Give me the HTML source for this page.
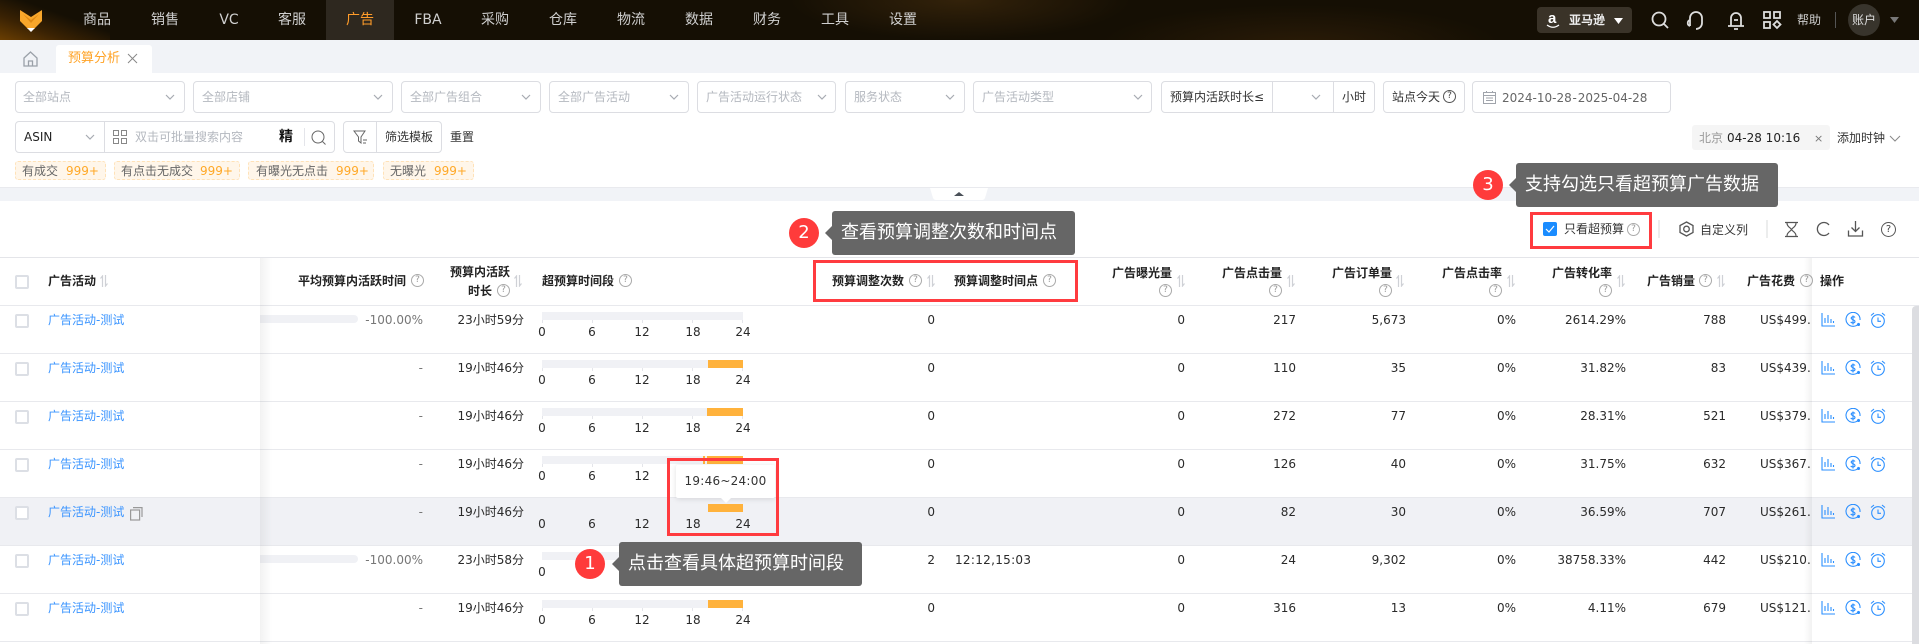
<!DOCTYPE html>
<html lang="zh"><head><meta charset="utf-8"><title>预算分析</title>
<style>
*{box-sizing:border-box}
html,body{margin:0;padding:0}
body{width:1919px;height:644px;overflow:hidden;position:relative;background:#f1f3f7;font:12px/16px "DejaVu Sans","WenQuanYi Zen Hei","Noto Sans CJK SC",sans-serif;color:#2a2a2a}
.a{position:absolute;white-space:nowrap}
#top{position:absolute;left:0;top:0;width:1919px;height:40px;background:
 radial-gradient(ellipse 170px 40px at 960px 0,#33220a 0,rgba(51,34,10,0) 100%),
 radial-gradient(ellipse 200px 40px at 1300px 45px,#2a1b07 0,rgba(42,27,7,0) 100%),
 linear-gradient(135deg,rgba(0,0,0,0) 70px,rgba(0,0,0,0) 100%),#150f04}
#corner{position:absolute;left:0;top:0;width:110px;height:40px;background:linear-gradient(to top right,#6a3e02 0,#3a2203 30%,#150f04 60%)}
.n{position:absolute;top:12px;font-size:14px;line-height:16px;color:#cfcfcf;transform:translateX(-50%);white-space:nowrap}
.s{position:absolute;top:81px;height:32px;background:#fff;border:1px solid #dcdde2;border-radius:4px}
.ph{position:absolute;top:89px;color:#b4b8bf;white-space:nowrap}
.tag{position:absolute;top:161px;height:19px;background:#fff6ea;border:1px dashed #ffe2b8;border-radius:3px}
.tx{position:absolute;top:163px;color:#666;white-space:nowrap}
.or{position:absolute;top:163px;color:#ffa827;white-space:nowrap}
.bb{position:absolute;background:#666;border-radius:3px;color:#fff;font-size:18px;line-height:24px;white-space:nowrap}
.bb:before{content:"";position:absolute;left:-7px;top:50%;margin-top:-7px;border:7px solid transparent;border-left:0;border-right-color:#666}
.rd{position:absolute;width:30px;height:30px;border-radius:50%;background:#ff3b3b;color:#fff;font-size:18px;line-height:30px;text-align:center}
.box{position:absolute;border:3px solid #ff3b3f}
.h{position:absolute;font-weight:bold;color:#222;white-space:nowrap;line-height:16px}
.q{position:absolute;width:13px;height:13px;border:1px solid #aaa;border-radius:50%;color:#999;font-size:9px;line-height:11px;text-align:center;font-weight:normal}
.so{position:absolute;width:8px;height:12px}
.r{position:absolute;left:0;width:1919px;height:48px;border-top:1px solid #e8e9ed;background:#fff}
.r.hv{background:#f0f1f5}
.ck{position:absolute;left:15px;top:8px;width:14px;height:14px;background:#fff;border:2px solid #dcdfe5;border-radius:2px}
.lk{position:absolute;left:48px;top:6px;color:#3a94ff;white-space:nowrap}
.v{position:absolute;top:6px;white-space:nowrap;color:#2a2a2a}
.avg{right:1496px;color:#777}
.dur{right:1395px}.adj{right:984px}.exp{right:734px}.clk{right:623px}.ord{right:513px}.ctr{right:403px}.cvr{right:293px}.sal{right:193px}
.sp{position:absolute;left:1760px;top:6px;width:52px;overflow:hidden;white-space:nowrap}
.bar{position:absolute;left:542px;top:6px;width:201px;height:8px;background:#f0f1f5}
.o{position:absolute;top:0;bottom:0;right:0;background:#ffb23c}
.tk{position:absolute;top:14px;width:1px;height:3px;background:#e4e5ea}
.lb{position:absolute;top:18px;width:30px;margin-left:-15px;text-align:center;color:#2a2a2a}
.pg{position:absolute;left:260px;top:9px;width:98px;height:8px;background:#f0f1f5;border-radius:0 4px 4px 0}
.ic{position:absolute;width:16px;height:16px;fill:none;stroke:#2b8fff;stroke-width:1.1}
svg{overflow:visible}
</style></head><body>
<svg width="0" height="0" style="position:absolute"><defs>
<symbol id="sort" viewBox="0 0 8 12"><path d="M2.500 12V1L.5 3.500M5.500 0v11l2-2.500" fill="none" stroke="#cfd1d6" stroke-width="1.200"/></symbol>
<symbol id="chev" viewBox="0 0 10 6"><path d="M1 1l4 4 4-4" fill="none" stroke="#a7abb2" stroke-width="1.200"/></symbol>
<symbol id="ib" viewBox="0 0 16 16"><path d="M2 1v13h13M5 11V6M8 11V3M11 11V7M13.500 11V9"/></symbol>
<symbol id="id" viewBox="0 0 16 16"><path d="M14 11A7 7 0 1 1 15 8M10 5.500C9.500 4.500 6.500 4.300 6.200 6c-.3 2 3.800 1.500 3.800 3.500 0 1.800-3.300 1.800-4.300.5M8 3.500v9"/><circle cx="13.500" cy="12.500" r="1" fill="#2b8fff"/></symbol>
<symbol id="ick" viewBox="0 0 16 16"><circle cx="8" cy="9" r="6.300"/><path d="M8 5.500V9.300h3M1 3.500L4 1M15 3.500L12 1"/></symbol>
</defs></svg>

<!-- Top bar -->
<div id="top"><div id="corner"></div>
<svg class="a" style="left:20px;top:10px" width="22" height="23" viewBox="0 0 22 23"><path d="M0 0l11 7 11-7v11l-8 8H8L0 11z" fill="#f9a72b"/><path d="M3 4l8 6 8-6-8 9z" fill="#e08a14"/><path d="M7 18h8l-4 4z" fill="#fff"/></svg>
<div style="position:absolute;left:326px;top:0;width:68px;height:40px;background:#2e281f"></div>
<div class="n" style="left:97px">商品</div><div class="n" style="left:165px">销售</div><div class="n" style="left:229px">VC</div><div class="n" style="left:292px">客服</div><div class="n" style="left:360px;color:#ff9c2a">广告</div><div class="n" style="left:428px">FBA</div><div class="n" style="left:495px">采购</div><div class="n" style="left:563px">仓库</div><div class="n" style="left:631px">物流</div><div class="n" style="left:699px">数据</div><div class="n" style="left:767px">财务</div><div class="n" style="left:835px">工具</div><div class="n" style="left:903px">设置</div>
<div style="position:absolute;left:1537px;top:7px;width:95px;height:26px;background:#3a3328;border-radius:4px"></div>
<div class="a" style="left:1548px;top:9px;font:bold 15px/20px 'Liberation Sans',sans-serif;color:#fff">a</div>
<svg class="a" style="left:1546px;top:25px" width="14" height="4" viewBox="0 0 14 4"><path d="M1 0c4 3 8 3 12 0" fill="none" stroke="#fff" stroke-width="1.200"/></svg>
<div class="a" style="left:1569px;top:12px;color:#eee;font-weight:bold">亚马逊</div>
<svg class="a" style="left:1614px;top:18px" width="9" height="6"><path d="M0 0h9L4.500 6z" fill="#fff"/></svg>
<svg class="a" style="left:1651px;top:11px" width="18" height="18" fill="none" stroke="#ddd" stroke-width="1.800"><circle cx="8" cy="8" r="6.500"/><path d="M13 13l4 4"/></svg>
<svg class="a" style="left:1687px;top:11px" width="18" height="19" fill="none" stroke="#ddd" stroke-width="1.800"><path d="M3 9c-3 1-3 5 0 6M3 15V7a6 6 0 0 1 12 0v5a6 6 0 0 1-6 6"/></svg>
<svg class="a" style="left:1727px;top:11px" width="18" height="19" fill="none" stroke="#ddd" stroke-width="1.800"><path d="M1 15h16M4 15V7a5 5 0 0 1 10 0v8M7 18h4M7 9h4"/></svg>
<svg class="a" style="left:1763px;top:11px" width="18" height="18" fill="none" stroke="#ddd" stroke-width="1.800"><rect x="1" y="1" width="6" height="6"/><rect x="11" y="1" width="6" height="6"/><rect x="1" y="11" width="6" height="6"/><path d="M14 10l3.500 3.500L14 17l-3.500-3.500z"/></svg>
<div class="a" style="left:1797px;top:12px;color:#ccc">帮助</div>
<div style="position:absolute;left:1835px;top:12px;width:1px;height:16px;background:#555"></div>
<div style="position:absolute;left:1848px;top:4px;width:32px;height:32px;border-radius:50%;background:#38342c"></div>
<div class="a" style="left:1852px;top:12px;color:#ddd">账户</div>
<svg class="a" style="left:1890px;top:17px" width="9" height="6"><path d="M0 0h9L4.500 6z" fill="#777"/></svg>
</div>

<!-- Tab bar -->
<svg class="a" style="left:23px;top:51px" width="15" height="16" fill="none" stroke="#9aa0a8" stroke-width="1.300"><path d="M1 7l6.500-6L14 7v8H1zM5.500 15v-5h4v5"/></svg>
<div style="position:absolute;left:56px;top:45px;width:96px;height:29px;background:#fff;border-radius:3px 3px 0 0"></div>
<div class="a" style="left:68px;top:51px;font-size:13px;color:#ffa327">预算分析</div>
<svg class="a" style="left:128px;top:54px" width="9" height="9" stroke="#888" stroke-width="1"><path d="M0 0l9 9M9 0L0 9"/></svg>

<!-- Filter panel -->
<div style="position:absolute;left:0;top:73px;width:1919px;height:115px;background:#fff;border-bottom:1px solid #e9eaee"></div>
<div class="s" style="left:15px;width:170px"></div><div class="ph" style="left:23px">全部站点</div><svg class="a" style="left:165px;top:94px" width="10" height="6"><use href="#chev"/></svg>
<div class="s" style="left:193px;width:200px"></div><div class="ph" style="left:202px">全部店铺</div><svg class="a" style="left:373px;top:94px" width="10" height="6"><use href="#chev"/></svg>
<div class="s" style="left:401px;width:140px"></div><div class="ph" style="left:410px">全部广告组合</div><svg class="a" style="left:521px;top:94px" width="10" height="6"><use href="#chev"/></svg>
<div class="s" style="left:549px;width:140px"></div><div class="ph" style="left:558px">全部广告活动</div><svg class="a" style="left:669px;top:94px" width="10" height="6"><use href="#chev"/></svg>
<div class="s" style="left:697px;width:139px"></div><div class="ph" style="left:706px">广告活动运行状态</div><svg class="a" style="left:817px;top:94px" width="10" height="6"><use href="#chev"/></svg>
<div class="s" style="left:845px;width:120px"></div><div class="ph" style="left:854px">服务状态</div><svg class="a" style="left:945px;top:94px" width="10" height="6"><use href="#chev"/></svg>
<div class="s" style="left:973px;width:179px"></div><div class="ph" style="left:982px">广告活动类型</div><svg class="a" style="left:1133px;top:94px" width="10" height="6"><use href="#chev"/></svg>
<div class="s" style="left:1161px;width:214px"></div>
<div style="position:absolute;left:1272px;top:81px;width:1px;height:32px;background:#dcdde2"></div>
<div style="position:absolute;left:1333px;top:81px;width:1px;height:32px;background:#dcdde2"></div>
<div class="a" style="left:1170px;top:89px;color:#333">预算内活跃时长≤</div>
<svg class="a" style="left:1311px;top:94px" width="10" height="6"><use href="#chev"/></svg>
<div class="a" style="left:1342px;top:89px;color:#333">小时</div>
<div class="s" style="left:1383px;width:82px"></div>
<div class="a" style="left:1392px;top:89px;color:#333">站点今天</div>
<div class="q" style="left:1443px;top:90px;border-color:#555;color:#444">?</div>
<div class="s" style="left:1472px;width:199px"></div>
<svg class="a" style="left:1483px;top:91px" width="13" height="13" fill="none" stroke="#a0a4ab"><rect x=".5" y="1.500" width="12" height="11"/><path d="M.5 4.500h12M3 7h7M3 9.500h7M3.500 0v2M9.500 0v2"/></svg>
<div class="a" style="left:1502px;top:90px;color:#666;word-spacing:-3px">2024-10-28 - 2025-04-28</div>

<div class="s" style="left:15px;top:121px;width:320px"></div>
<div style="position:absolute;left:104px;top:121px;width:1px;height:32px;background:#dcdde2"></div>
<div class="a" style="left:24px;top:129px;color:#222">ASIN</div>
<svg class="a" style="left:85px;top:134px" width="10" height="6"><use href="#chev"/></svg>
<svg class="a" style="left:113px;top:130px" width="14" height="14" fill="none" stroke="#888"><rect x=".5" y=".5" width="5" height="5"/><rect x="8.500" y=".5" width="5" height="5"/><rect x=".5" y="8.500" width="5" height="5"/><rect x="8.500" y="8.500" width="5" height="5"/></svg>
<div class="a" style="left:135px;top:129px;color:#b4b8bf">双击可批量搜索内容</div>
<div class="a" style="left:279px;top:129px;font-size:14px;color:#111;font-weight:bold">精</div>
<div style="position:absolute;left:304px;top:128px;width:1px;height:18px;background:#e4e5ea"></div>
<svg class="a" style="left:311px;top:130px" width="16" height="16" fill="none" stroke="#666"><circle cx="7" cy="7" r="6"/><path d="M11.500 11.500l3 3"/></svg>
<div class="s" style="left:343px;top:121px;width:99px"></div>
<div style="position:absolute;left:376px;top:121px;width:1px;height:32px;background:#dcdde2"></div>
<svg class="a" style="left:353px;top:130px" width="15" height="15" fill="none" stroke="#666"><path d="M1 1h11L8 7v6L5.500 11V7zM10 10h4M10 13h3"/></svg>
<div class="a" style="left:385px;top:129px;color:#333">筛选模板</div>
<div class="a" style="left:450px;top:129px;color:#333">重置</div>

<div style="position:absolute;left:1692px;top:125px;width:138px;height:25px;background:#f5f5f5;border-radius:3px"></div>
<div class="a" style="left:1699px;top:130px;color:#999">北京</div>
<div class="a" style="left:1727px;top:130px;color:#222">04-28 10:16</div>
<div class="a" style="left:1814px;top:131px;color:#777;font-size:11px">×</div>
<div class="a" style="left:1837px;top:130px;color:#333">添加时钟</div>
<svg class="a" style="left:1889px;top:135px" width="12" height="7"><path d="M1 1l5 5 5-5" fill="none" stroke="#888"/></svg>

<div class="tag" style="left:15px;width:91px"></div><div class="tx" style="left:22px">有成交</div><div class="or" style="left:66px">999+</div>
<div class="tag" style="left:114px;width:126px"></div><div class="tx" style="left:121px">有点击无成交</div><div class="or" style="left:200px">999+</div>
<div class="tag" style="left:248px;width:126px"></div><div class="tx" style="left:256px">有曝光无点击</div><div class="or" style="left:336px">999+</div>
<div class="tag" style="left:383px;width:91px"></div><div class="tx" style="left:390px">无曝光</div><div class="or" style="left:434px">999+</div>

<!-- Collapse handle -->
<svg class="a" style="left:930px;top:188px" width="58" height="12"><path d="M0 0h58l-3 10q-1 2-3 2H6q-2 0-3-2z" fill="#fff"/><path d="M24 8l5-4 5 4z" fill="#4a5058"/></svg>

<!-- Toolbar & table -->
<div style="position:absolute;left:0;top:201px;width:1919px;height:443px;background:#fff"></div>
<div style="position:absolute;left:0;top:257px;width:1919px;height:1px;background:#e4e5e9"></div>

<div class="a" style="left:1564px;top:221px;color:#333">只看超预算</div>
<div style="position:absolute;left:1543px;top:222px;width:14px;height:14px;background:#1a8cff;border-radius:2px"></div>
<svg class="a" style="left:1545px;top:225px" width="10" height="8"><path d="M1 4l3 3 5-6" fill="none" stroke="#fff" stroke-width="1.200"/></svg>
<div class="q" style="left:1627px;top:223px">?</div>
<div style="position:absolute;left:1658px;top:220px;width:2px;height:18px;background:#eceded"></div>
<svg class="a" style="left:1679px;top:221px" width="15" height="16" fill="none" stroke="#555" stroke-width="1.300"><path d="M7.500 1l6.500 3.500v7L7.500 15 1 11.500v-7z"/><circle cx="7.500" cy="8" r="2.800"/></svg>
<div class="a" style="left:1700px;top:222px;color:#333">自定义列</div>
<div style="position:absolute;left:1766px;top:220px;width:2px;height:18px;background:#eceded"></div>
<svg class="a" style="left:1785px;top:222px" width="13" height="15" fill="none" stroke="#555" stroke-width="1.200"><path d="M0 .5h13M0 14.500h13M2 1c0 4 3 4 4.500 6.500C8 5 11 5 11 1M2 14c0-4 3-4 4.500-6.500C8 10 11 10 11 14"/></svg>
<svg class="a" style="left:1816px;top:222px" width="14" height="14" fill="none" stroke="#555" stroke-width="1.300"><path d="M13 3A6.500 6.500 0 1 0 13 11"/></svg>
<svg class="a" style="left:1848px;top:221px" width="15" height="16" fill="none" stroke="#555" stroke-width="1.300"><path d="M7.500 0v10M3.500 6.500l4 4 4-4M.5 9.500v5.500h14V9.500"/></svg>
<div class="q" style="left:1881px;top:222px;width:15px;height:15px;border-color:#555;color:#444;font-size:10px;line-height:13px">?</div>

<!-- Header -->
<div style="position:absolute;left:15px;top:275px;width:14px;height:14px;border:2px solid #dcdfe5;border-radius:2px"></div>
<div class="h" style="left:48px;top:273px">广告活动</div><svg class="so" style="left:100px;top:275px"><use href="#sort"/></svg>
<div class="h" style="left:298px;top:273px">平均预算内活跃时间</div><div class="q" style="left:411px;top:274px">?</div>
<div class="h" style="left:450px;top:264px">预算内活跃</div><div class="h" style="left:468px;top:283px">时长</div><div class="q" style="left:497px;top:284px">?</div><svg class="so" style="left:514px;top:275px"><use href="#sort"/></svg>
<div class="h" style="left:542px;top:273px">超预算时间段</div><div class="q" style="left:619px;top:274px">?</div>
<div class="h" style="left:832px;top:273px">预算调整次数</div><div class="q" style="left:909px;top:274px">?</div><svg class="so" style="left:927px;top:275px"><use href="#sort"/></svg>
<div class="h" style="left:954px;top:273px">预算调整时间点</div><div class="q" style="left:1043px;top:274px">?</div>
<div class="h" style="left:1112px;top:265px">广告曝光量</div><div class="q" style="left:1159px;top:284px">?</div><svg class="so" style="left:1177px;top:275px"><use href="#sort"/></svg>
<div class="h" style="left:1222px;top:265px">广告点击量</div><div class="q" style="left:1269px;top:284px">?</div><svg class="so" style="left:1287px;top:275px"><use href="#sort"/></svg>
<div class="h" style="left:1332px;top:265px">广告订单量</div><div class="q" style="left:1379px;top:284px">?</div><svg class="so" style="left:1396px;top:275px"><use href="#sort"/></svg>
<div class="h" style="left:1442px;top:265px">广告点击率</div><div class="q" style="left:1489px;top:284px">?</div><svg class="so" style="left:1507px;top:275px"><use href="#sort"/></svg>
<div class="h" style="left:1552px;top:265px">广告转化率</div><div class="q" style="left:1599px;top:284px">?</div><svg class="so" style="left:1617px;top:275px"><use href="#sort"/></svg>
<div class="h" style="left:1647px;top:273px">广告销量</div><div class="q" style="left:1699px;top:274px">?</div><svg class="so" style="left:1717px;top:275px"><use href="#sort"/></svg>
<div class="h" style="left:1747px;top:273px">广告花费</div><div class="q" style="left:1800px;top:274px">?</div>
<div class="h" style="left:1820px;top:273px">操作</div>

<!-- Rows -->
<div class="r" style="top:305px"><div class="ck"></div><div class="lk">广告活动-测试</div><div class="pg"></div><div class="v avg">-100.00%</div><div class="v dur">23小时59分</div><div class="bar"></div><div class="tk" style="left:542px"></div><div class="tk" style="left:592px"></div><div class="tk" style="left:642px"></div><div class="tk" style="left:692px"></div><div class="tk" style="left:742px"></div><div class="lb" style="left:542px">0</div><div class="lb" style="left:592px">6</div><div class="lb" style="left:642px">12</div><div class="lb" style="left:693px">18</div><div class="lb" style="left:743px">24</div><div class="v adj">0</div><div class="v exp">0</div><div class="v clk">217</div><div class="v ord">5,673</div><div class="v ctr">0%</div><div class="v cvr">2614.29%</div><div class="v sal">788</div><div class="sp">US$499.</div></div>
<div class="r" style="top:353px"><div class="ck"></div><div class="lk">广告活动-测试</div><div class="v avg">-</div><div class="v dur">19小时46分</div><div class="bar"><div class="o" style="width:35px"></div></div><div class="tk" style="left:542px"></div><div class="tk" style="left:592px"></div><div class="tk" style="left:642px"></div><div class="tk" style="left:692px"></div><div class="tk" style="left:742px"></div><div class="lb" style="left:542px">0</div><div class="lb" style="left:592px">6</div><div class="lb" style="left:642px">12</div><div class="lb" style="left:693px">18</div><div class="lb" style="left:743px">24</div><div class="v adj">0</div><div class="v exp">0</div><div class="v clk">110</div><div class="v ord">35</div><div class="v ctr">0%</div><div class="v cvr">31.82%</div><div class="v sal">83</div><div class="sp">US$439.</div></div>
<div class="r" style="top:401px"><div class="ck"></div><div class="lk">广告活动-测试</div><div class="v avg">-</div><div class="v dur">19小时46分</div><div class="bar"><div class="o" style="width:36px"></div></div><div class="tk" style="left:542px"></div><div class="tk" style="left:592px"></div><div class="tk" style="left:642px"></div><div class="tk" style="left:692px"></div><div class="tk" style="left:742px"></div><div class="lb" style="left:542px">0</div><div class="lb" style="left:592px">6</div><div class="lb" style="left:642px">12</div><div class="lb" style="left:693px">18</div><div class="lb" style="left:743px">24</div><div class="v adj">0</div><div class="v exp">0</div><div class="v clk">272</div><div class="v ord">77</div><div class="v ctr">0%</div><div class="v cvr">28.31%</div><div class="v sal">521</div><div class="sp">US$379.</div></div>
<div class="r" style="top:449px"><div class="ck"></div><div class="lk">广告活动-测试</div><div class="v avg">-</div><div class="v dur">19小时46分</div><div class="bar"><div class="o" style="width:36px"></div><div class="o" style="right:38px;width:2px"></div></div><div class="tk" style="left:542px"></div><div class="tk" style="left:592px"></div><div class="tk" style="left:642px"></div><div class="lb" style="left:542px">0</div><div class="lb" style="left:592px">6</div><div class="lb" style="left:642px">12</div><div class="v adj">0</div><div class="v exp">0</div><div class="v clk">126</div><div class="v ord">40</div><div class="v ctr">0%</div><div class="v cvr">31.75%</div><div class="v sal">632</div><div class="sp">US$367.</div></div>
<div class="r hv" style="top:497px"><div class="ck"></div><div class="lk">广告活动-测试</div><svg class="a" style="left:130px;top:9px" width="13" height="14" fill="none" stroke="#999" stroke-width="1.200"><rect x=".6" y="3" width="9" height="10"/><path d="M3 .6h9V10"/></svg><div class="v avg">-</div><div class="v dur">19小时46分</div><div class="bar"><div class="o" style="width:35px"></div></div><div class="lb" style="left:542px">0</div><div class="lb" style="left:592px">6</div><div class="lb" style="left:642px">12</div><div class="lb" style="left:693px">18</div><div class="lb" style="left:743px">24</div><div class="v adj">0</div><div class="v exp">0</div><div class="v clk">82</div><div class="v ord">30</div><div class="v ctr">0%</div><div class="v cvr">36.59%</div><div class="v sal">707</div><div class="sp">US$261.</div></div>
<div class="r" style="top:545px"><div class="ck"></div><div class="lk">广告活动-测试</div><div class="pg"></div><div class="v avg">-100.00%</div><div class="v dur">23小时58分</div><div class="bar"></div><div class="lb" style="left:542px">0</div><div class="lb" style="left:592px">6</div><div class="v adj">2</div><div class="v" style="left:955px;letter-spacing:.3px">12:12,15:03</div><div class="v exp">0</div><div class="v clk">24</div><div class="v ord">9,302</div><div class="v ctr">0%</div><div class="v cvr">38758.33%</div><div class="v sal">442</div><div class="sp">US$210.</div></div>
<div class="r" style="top:593px"><div class="ck"></div><div class="lk">广告活动-测试</div><div class="v avg">-</div><div class="v dur">19小时46分</div><div class="bar"><div class="o" style="width:35px"></div></div><div class="tk" style="left:542px"></div><div class="tk" style="left:592px"></div><div class="tk" style="left:642px"></div><div class="tk" style="left:692px"></div><div class="tk" style="left:742px"></div><div class="lb" style="left:542px">0</div><div class="lb" style="left:592px">6</div><div class="lb" style="left:642px">12</div><div class="lb" style="left:693px">18</div><div class="lb" style="left:743px">24</div><div class="v adj">0</div><div class="v exp">0</div><div class="v clk">316</div><div class="v ord">13</div><div class="v ctr">0%</div><div class="v cvr">4.11%</div><div class="v sal">679</div><div class="sp">US$121.</div></div>
<div style="position:absolute;left:0;top:641px;width:1919px;height:1px;background:#e8e9ed"></div>

<!-- Fixed column shadows -->
<div style="position:absolute;left:260px;top:258px;width:12px;height:386px;background:linear-gradient(to right,rgba(0,0,0,.05),rgba(0,0,0,0))"></div>
<div style="position:absolute;left:1804px;top:258px;width:8px;height:386px;background:linear-gradient(to left,rgba(0,0,0,.05),rgba(0,0,0,0))"></div>
<div style="position:absolute;left:1912px;top:306px;width:7px;height:338px;background:#dcdde1;border-radius:4px 0 0 0"></div>

<!-- Action icons -->
<svg class="ic" style="left:1820px;top:312px"><use href="#ib"/></svg><svg class="ic" style="left:1845px;top:312px"><use href="#id"/></svg><svg class="ic" style="left:1870px;top:312px"><use href="#ick"/></svg>
<svg class="ic" style="left:1820px;top:360px"><use href="#ib"/></svg><svg class="ic" style="left:1845px;top:360px"><use href="#id"/></svg><svg class="ic" style="left:1870px;top:360px"><use href="#ick"/></svg>
<svg class="ic" style="left:1820px;top:408px"><use href="#ib"/></svg><svg class="ic" style="left:1845px;top:408px"><use href="#id"/></svg><svg class="ic" style="left:1870px;top:408px"><use href="#ick"/></svg>
<svg class="ic" style="left:1820px;top:456px"><use href="#ib"/></svg><svg class="ic" style="left:1845px;top:456px"><use href="#id"/></svg><svg class="ic" style="left:1870px;top:456px"><use href="#ick"/></svg>
<svg class="ic" style="left:1820px;top:504px"><use href="#ib"/></svg><svg class="ic" style="left:1845px;top:504px"><use href="#id"/></svg><svg class="ic" style="left:1870px;top:504px"><use href="#ick"/></svg>
<svg class="ic" style="left:1820px;top:552px"><use href="#ib"/></svg><svg class="ic" style="left:1845px;top:552px"><use href="#id"/></svg><svg class="ic" style="left:1870px;top:552px"><use href="#ick"/></svg>
<svg class="ic" style="left:1820px;top:600px"><use href="#ib"/></svg><svg class="ic" style="left:1845px;top:600px"><use href="#id"/></svg><svg class="ic" style="left:1870px;top:600px"><use href="#ick"/></svg>

<!-- Tooltip -->
<div style="position:absolute;left:676px;top:465px;width:99px;height:33px;background:#fff;box-shadow:0 1px 6px rgba(0,0,0,.12);border-radius:2px"></div>
<svg class="a" style="left:721px;top:498px" width="10" height="5"><path d="M0 0h10L5 5z" fill="#fff"/></svg>
<div class="a" style="left:676px;width:99px;top:473px;text-align:center;color:#333;letter-spacing:.25px">19:46~24:00</div>

<!-- Annotations -->
<div class="box" style="left:667px;top:458px;width:112px;height:78px"></div>
<div class="box" style="left:813px;top:260px;width:265px;height:42px"></div>
<div class="box" style="left:1530px;top:212px;width:122px;height:37px"></div>
<div class="rd" style="left:575px;top:549px">1</div>
<div class="bb" style="left:619px;top:542px;width:243px;height:44px;padding:10px 9px">点击查看具体超预算时间段</div>
<div class="rd" style="left:789px;top:218px">2</div>
<div class="bb" style="left:832px;top:211px;width:243px;height:44px;padding:10px 9px">查看预算调整次数和时间点</div>
<div class="rd" style="left:1473px;top:170px">3</div>
<div class="bb" style="left:1516px;top:163px;width:262px;height:44px;padding:10px 9px">支持勾选只看超预算广告数据</div>
</body></html>
